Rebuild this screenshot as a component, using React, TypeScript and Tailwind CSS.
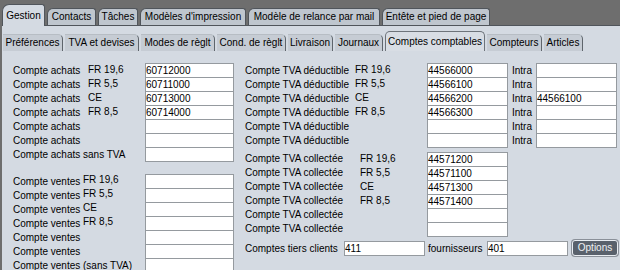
const topTabs = [
  { label: 'Gestion', w: 'w-[43px]', active: true },
  { label: 'Contacts', w: 'w-[49px]' },
  { label: 'Tâches', w: 'w-[40px]' },
  { label: "Modèles d'impression", w: 'w-[106px]' },
  { label: 'Modèle de relance par mail', w: 'w-[132px]' },
  { label: 'Entête et pied de page', w: 'w-[108px]' },
];

const subTabs = [
  { label: 'Préférences', w: 'w-[60px]' },
  { label: 'TVA et devises', w: 'w-[74px]' },
  { label: 'Modes de règlt', w: 'w-[74px]' },
  { label: 'Cond. de règlt', w: 'w-[69px]' },
  { label: 'Livraison', w: 'w-[45px]' },
  { label: 'Journaux', w: 'w-[48px]' },
  { label: 'Comptes comptables', w: 'w-[100px]', active: true },
  { label: 'Compteurs', w: 'w-[55px]' },
  { label: 'Articles', w: 'w-[39px]' },
];

const achats = [
  ['FR 19,6', '60712000'],
  ['FR 5,5', '60711000'],
  ['CE', '60713000'],
  ['FR 8,5', '60714000'],
  ['', ''],
  ['', ''],
];

const ventes = [['FR 19,6'], ['FR 5,5'], ['CE'], ['FR 8,5'], [''], ['']];

const deductible = [
  ['FR 19,6', '44566000', ''],
  ['FR 5,5', '44566100', ''],
  ['CE', '44566200', '44566100'],
  ['FR 8,5', '44566300', ''],
  ['', '', ''],
  ['', '', ''],
];

const collectee = [
  ['FR 19,6', '44571200'],
  ['FR 5,5', '44571100'],
  ['CE', '44571300'],
  ['FR 8,5', '44571400'],
  ['', ''],
  ['', ''],
];

const Box = ({ value = '', w }: { value?: string; w: string }) => (
  <input
    readOnly
    defaultValue={value}
    className={`${w} h-[15px] shrink-0 border border-[#959a9f] bg-white p-0 text-[10px] leading-[13px] text-black outline-none`}
  />
);

export default function App() {
  return (
    <div className="h-[270px] w-[620px] overflow-hidden bg-[#6e6e6e] font-['Liberation_Sans',Arial,sans-serif] text-[10px] text-black">
      {/* main tabs */}
      <div className="flex h-[25px] items-end gap-[2px] pl-[2px]">
        {topTabs.map((t) =>
          t.active ? (
            <div
              key={t.label}
              className={`${t.w} relative z-10 -mb-px h-[22px] rounded-tl-[7px] rounded-tr-[3px] border border-b-0 border-[#50555b] bg-[#d4dae2] pt-[4px] text-center leading-[14px]`}
            >
              {t.label}
            </div>
          ) : (
            <div
              key={t.label}
              className={`${t.w} h-[17px] rounded-tl-[6px] rounded-tr-[3px] border border-b-0 border-[#50555b] bg-[#bfc6ce] pt-px text-center leading-[14px]`}
            >
              {t.label}
            </div>
          ),
        )}
      </div>

      <div className="ml-[2px] h-[245px] border-t border-[#50555b] bg-[#d4dae2]">
        {/* sub tabs */}
        <div className="flex h-[25px] items-end gap-[2px] pl-px">
          {subTabs.map((t) =>
            t.active ? (
              <div
                key={t.label}
                className={`${t.w} h-[20px] rounded-tl-[5px] rounded-tr-[5px] border border-b-0 border-[#6d737a] bg-[#d8dde4] pt-[3px] text-center leading-[14px]`}
              >
                {t.label}
              </div>
            ) : (
              <div
                key={t.label}
                className={`${t.w} h-[17px] rounded-tr-[5px] border-r border-t border-r-[#5f656c] border-t-[#b7bdc4] bg-[#c6ccd4] pt-px text-center leading-[14px]`}
              >
                {t.label}
              </div>
            ),
          )}
        </div>

        <div className="mt-[12px] flex pl-[11px]">
          {/* left column */}
          <div className="flex w-[232px] flex-col">
            {achats.map(([sub, val], i) => (
              <div key={i} className="flex h-[14px] items-start">
                <span className="w-[75px] shrink-0 leading-[15px]">Compte achats</span>
                <span className="w-[57px] shrink-0 leading-[13px]">{sub}</span>
                <Box w="w-[89px]" value={val} />
              </div>
            ))}
            <div className="flex h-[14px] items-start">
              <span className="w-[132px] shrink-0 leading-[15px]">Compte achats sans TVA</span>
              <Box w="w-[89px]" />
            </div>

            <div className="mt-[13px] flex flex-col">
              {ventes.map(([sub], i) => (
                <div key={i} className="flex h-[14px] items-start">
                  <span className="w-[70px] shrink-0 leading-[15px]">Compte ventes</span>
                  <span className="w-[62px] shrink-0 leading-[12px]">{sub}</span>
                  <Box w="w-[89px]" />
                </div>
              ))}
              <div className="flex h-[14px] items-start">
                <span className="w-[132px] shrink-0 leading-[15px]">Compte ventes (sans TVA)</span>
                <Box w="w-[89px]" />
              </div>
            </div>
          </div>

          {/* right column */}
          <div className="flex flex-col">
            {deductible.map(([sub, val, intra], i) => (
              <div key={i} className="flex h-[14px] items-start">
                <span className="w-[110px] shrink-0 leading-[15px]">Compte TVA déductible</span>
                <span className="w-[72px] shrink-0 leading-[14px]">{sub}</span>
                <Box w="w-[81px]" value={val} />
                <span className="w-[28px] shrink-0 pl-[4px] leading-[15px]">Intra</span>
                <Box w="w-[81px]" value={intra} />
              </div>
            ))}

            <div className="mt-[5px] flex flex-col">
              {collectee.map(([sub, val], i) => (
                <div key={i} className="flex h-[14px] items-start">
                  <span className="w-[115px] shrink-0 leading-[14px]">Compte TVA collectée</span>
                  <span className="w-[67px] shrink-0 leading-[14px]">{sub}</span>
                  <Box w="w-[81px]" value={val} />
                </div>
              ))}
            </div>

            <div className="mt-[5px] flex items-start">
              <span className="w-[99px] shrink-0 leading-[15px]">Comptes tiers clients</span>
              <Box w="w-[81px]" value="411" />
              <span className="w-[62px] shrink-0 pl-[3px] leading-[15px]">fournisseurs</span>
              <Box w="w-[81px]" value="401" />
              <button className="ml-[4px] h-[16px] w-[46px] -translate-y-px rounded-[3px] border border-[#e9edf2] bg-[#59616c] text-[10px] leading-[12px] text-[#eef0f3] shadow-[0_0_0_1px_#8a9099]">
                Options
              </button>
            </div>
          </div>
        </div>
      </div>
    </div>
  );
}
